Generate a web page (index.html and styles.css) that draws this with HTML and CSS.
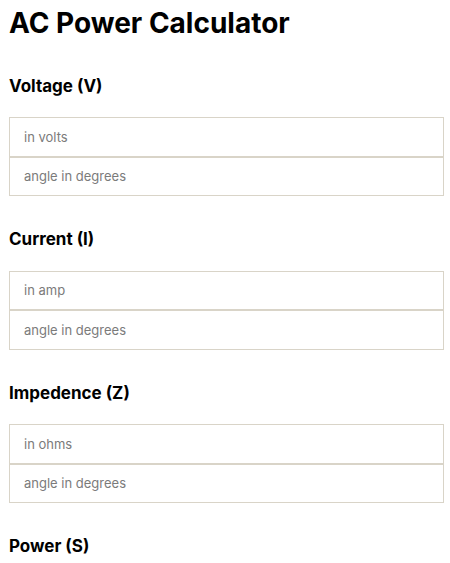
FILE: index.html
```html
<!DOCTYPE html>
<html lang="en">
<head>
<meta charset="utf-8">
<title>AC Power Calculator</title>
<link rel="stylesheet" href="styles.css">
</head>
<body>
<main class="page">
  <h1 class="title">AC Power Calculator</h1>
  <section class="group">
    <h2 class="group-title">Voltage (V)</h2>
    <div class="fields">
      <input class="field" type="text" placeholder="in volts">
      <input class="field" type="text" placeholder="angle in degrees">
    </div>
  </section>
  <section class="group">
    <h2 class="group-title">Current (I)</h2>
    <div class="fields">
      <input class="field" type="text" placeholder="in amp">
      <input class="field" type="text" placeholder="angle in degrees">
    </div>
  </section>
  <section class="group">
    <h2 class="group-title">Impedence (Z)</h2>
    <div class="fields">
      <input class="field" type="text" placeholder="in ohms">
      <input class="field" type="text" placeholder="angle in degrees">
    </div>
  </section>
  <section class="group">
    <h2 class="group-title">Power (S)</h2>
  </section>
</main>
</body>
</html>
```
FILE: styles.css
```css
* { box-sizing: border-box; }
html, body { margin: 0; padding: 0; background: #fff; }
body {
  font-family: Inter, "Noto Sans", "Liberation Sans", sans-serif;
  color: #000;
}
.page {
  padding: 5.5px 6px 0 9px;
  display: flex;
  flex-direction: column;
}
.title {
  margin: 0 0 36px;
  font-size: 28px;
  line-height: 34px;
  font-weight: 700;
}
.group {
  display: flex;
  flex-direction: column;
  gap: 21.5px;
  margin-bottom: 33px;
}
.group-title {
  margin: 0;
  font-size: 17px;
  line-height: 20px;
  font-weight: 700;
}
.fields {
  display: flex;
  flex-direction: column;
}
.field {
  display: block;
  width: 100%;
  height: 39.5px;
  margin: 0;
  padding: 0 14px;
  border: 1px solid #d9d4c8;
  border-radius: 0;
  background: #fff;
  font-family: Inter, "Noto Sans", "Liberation Sans", sans-serif;
  font-size: 13px;
  color: #333;
  outline: none;
}
.field::placeholder { color: #7b7b7b; opacity: 1; }
```
